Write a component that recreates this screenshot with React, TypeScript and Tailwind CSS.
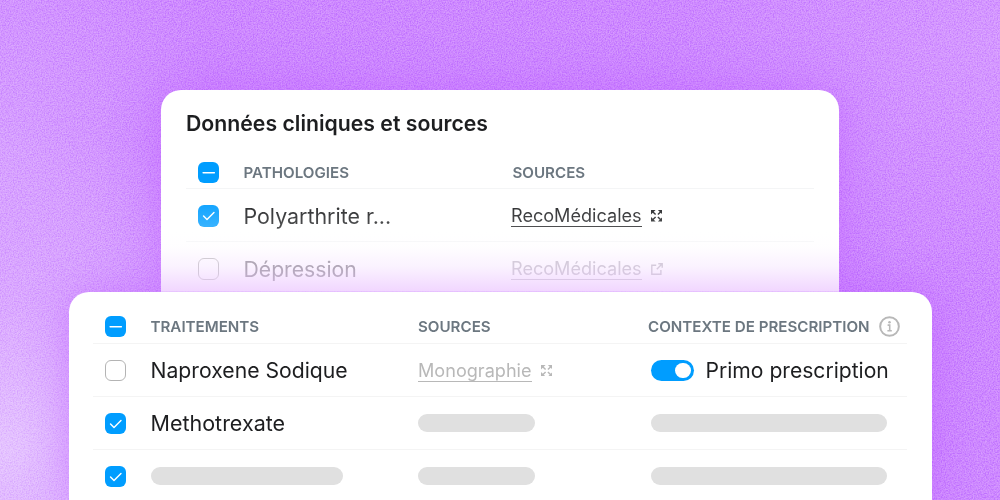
import type { ReactNode } from 'react'

type CheckState = 'partial' | 'checked' | 'empty'

function Checkbox({ state, className = '' }: { state: CheckState; className?: string }) {
  if (state === 'empty') {
    return <span className={`block size-[21.5px] shrink-0 rounded-[6px] border-[1.5px] border-[#b4b4b4] bg-white ${className}`} />
  }

  return (
    <span className={`block size-[21.5px] shrink-0 rounded-[6px] bg-[#009dff] ${className}`}>
      <svg viewBox="0 0 21 21" className="size-full" fill="none" stroke="#fff" strokeWidth="1.4" strokeLinecap="round" strokeLinejoin="round">
        {state === 'partial' ? <path d="M5 10.5h11" /> : <path d="m5.4 10.8 3.4 3.4 6.8-6.9" />}
      </svg>
    </span>
  )
}

function ExpandIcon() {
  return (
    <svg viewBox="0 0 12 12" className="size-[11.5px] shrink-0" fill="currentColor" stroke="currentColor" strokeWidth="1.5">
      <path stroke="none" d="M0 0h4.8L0 4.8zM12 0v4.8L7.2 0zM0 12V7.2L4.8 12zM12 12H7.2L12 7.2z" />
      <path fill="none" d="m1.5 1.5 3.3 3.3M10.5 1.5 7.2 4.8M1.5 10.5l3.3-3.3M10.5 10.5 7.2 7.2" />
    </svg>
  )
}

function ExternalIcon() {
  return (
    <svg viewBox="0 0 12 12" className="size-3 shrink-0" fill="none" stroke="currentColor" strokeWidth="1.4">
      <path d="M5.2 2.2H.8v9.1h9.1V7M7.3.8h3.9v3.9M11.2.8 5.8 6.2" />
    </svg>
  )
}

function InfoIcon() {
  return (
    <svg viewBox="0 0 20 20" className="size-[21px] shrink-0" fill="none" stroke="#b8b8b8" strokeWidth="1.9">
      <circle cx="10" cy="10" r="8.9" />
      <path d="M8.2 8.7h2v5.1M8 14h4.2" strokeWidth="1.5" />
      <circle cx="10" cy="5.9" r="1.2" fill="#b8b8b8" stroke="none" />
    </svg>
  )
}

function HeadCell({ children, className = '' }: { children: ReactNode; className?: string }) {
  return <span className={`text-[15.15px] font-[560] leading-none text-[#6c7780] ${className}`}>{children}</span>
}

function SourceLink({ label, icon, className }: { label: string; icon: ReactNode; className: string }) {
  return (
    <div className={`flex items-center gap-[9px] ${className}`}>
      <a className="border-b-[1.5px] border-current text-[18.1px] leading-[21px]">{label}</a>
      {icon}
    </div>
  )
}

function Skeleton({ className }: { className: string }) {
  return <div className={`mb-[1.5px] h-[18px] rounded-full bg-[#e0e0e0] ${className}`} />
}

const topRow = 'grid grid-cols-[57.5px_267.5px_1fr] items-center border-[#f4f5f6]'
const bottomRow = 'grid grid-cols-[57.5px_267.5px_230px_1fr] items-center border-[#f4f4f4]'

export default function App() {
  return (
    <div className="relative isolate flex h-[500px] w-[1000px] flex-col items-center overflow-hidden whitespace-nowrap bg-[#ce89ff] bg-[radial-gradient(ellipse_380px_330px_at_0%_90%,#e5c4ff_0%,#e0b6ff99_45%,transparent_100%),radial-gradient(ellipse_330px_260px_at_100%_8%,#d599ff_0%,transparent_100%),radial-gradient(ellipse_220px_300px_at_0%_30%,#d69fff_0%,transparent_100%)] pt-[90px] font-['Inter',sans-serif] text-[#1d1e20]">
      {/* Background grain */}
      <svg className="absolute inset-0 -z-10 size-full opacity-[0.38] mix-blend-soft-light">
        <filter id="grain" x="0" y="0" width="100%" height="100%" colorInterpolationFilters="sRGB">
          <feTurbulence type="fractalNoise" baseFrequency="0.75" numOctaves="3" />
          <feColorMatrix type="matrix" values="2 0 0 0 -0.5  2 0 0 0 -0.5  2 0 0 0 -0.5  0 0 0 0 1" />
        </filter>
        <rect width="100%" height="100%" filter="url(#grain)" />
      </svg>

      {/* Pathologies */}
      <section className="relative z-10 h-[201.5px] w-[678px] shrink-0 rounded-t-[20px] bg-white px-[25px] shadow-[0_0_48px_#b950ff70] [clip-path:inset(-80px_-80px_0_-80px)]">
        <h2 className="pt-[20px] text-[21.25px] font-semibold leading-[27px]">Données cliniques et sources</h2>
        <div className={`${topRow} mt-[18px] h-[34px] border-b pt-[2px]`}>
          <Checkbox state="partial" className="ml-[11.5px]" />
          <HeadCell>PATHOLOGIES</HeadCell>
          <HeadCell className="pl-[1.5px]">SOURCES</HeadCell>
        </div>
        <div className={`${topRow} h-[53px] border-b pt-[2px]`}>
          <Checkbox state="checked" className="ml-[11.5px]" />
          <span className="pt-px text-[21.4px]">Polyarthrite r...</span>
          <SourceLink label="RecoMédicales" icon={<ExpandIcon />} className="text-[#1d1e20]" />
        </div>
        <div className={`${topRow} h-[54px]`}>
          <Checkbox state="empty" className="ml-[11.5px]" />
          <span className="pt-px text-[21.2px] text-[#77737b]">Dépression</span>
          <SourceLink label="RecoMédicales" icon={<ExternalIcon />} className="text-[#b9b5be]" />
        </div>
        {/* Fade towards the front card */}
        <div className="absolute inset-x-0 bottom-0 h-[100px] bg-[linear-gradient(to_bottom,#ffffff00_0%,#ffffff40_40%,#fefbff60_55%,#f5e3ff78_75%,#edcaffc8_100%)]" />
      </section>

      {/* Traitements */}
      <section className="relative w-[863px] shrink-0 grow rounded-t-[20px] bg-white px-[24.5px] pt-[18px] shadow-[0_0_40px_#b950ff70]">
        <div className={`${bottomRow} h-[34px] border-b-[1.5px] pt-px`}>
          <Checkbox state="partial" className="ml-[11.5px]" />
          <HeadCell>TRAITEMENTS</HeadCell>
          <HeadCell>SOURCES</HeadCell>
          <div className="flex items-center gap-[9px]">
            <HeadCell>CONTEXTE DE PRESCRIPTION</HeadCell>
            <InfoIcon />
          </div>
        </div>
        <div className={`${bottomRow} h-[53px] border-b-[1.5px] pt-[2px]`}>
          <Checkbox state="empty" className="ml-[11.5px]" />
          <span className="pt-px text-[21.2px]">Naproxene Sodique</span>
          <SourceLink label="Monographie" icon={<ExpandIcon />} className="text-[#b8b8b8]" />
          <div className="flex items-center gap-3 pl-[3px]">
            <span className="flex h-[21px] w-[42.5px] items-center justify-end rounded-full bg-[#009dff] pr-[3px]">
              <span className="size-[15.5px] rounded-full bg-white" />
            </span>
            <span className="pt-px text-[21.1px]">Primo prescription</span>
          </div>
        </div>
        <div className={`${bottomRow} h-[53px] border-b-[1.5px] pt-[2px]`}>
          <Checkbox state="checked" className="ml-[11.5px]" />
          <span className="text-[21.5px]">Methotrexate</span>
          <Skeleton className="w-[117px]" />
          <Skeleton className="ml-[3px] w-[235.5px]" />
        </div>
        <div className={`${bottomRow} h-[53px] pt-px`}>
          <Checkbox state="checked" className="ml-[11.5px]" />
          <Skeleton className="w-[192.5px]" />
          <Skeleton className="w-[117px]" />
          <Skeleton className="ml-[3px] w-[235.5px]" />
        </div>
      </section>
    </div>
  )
}
